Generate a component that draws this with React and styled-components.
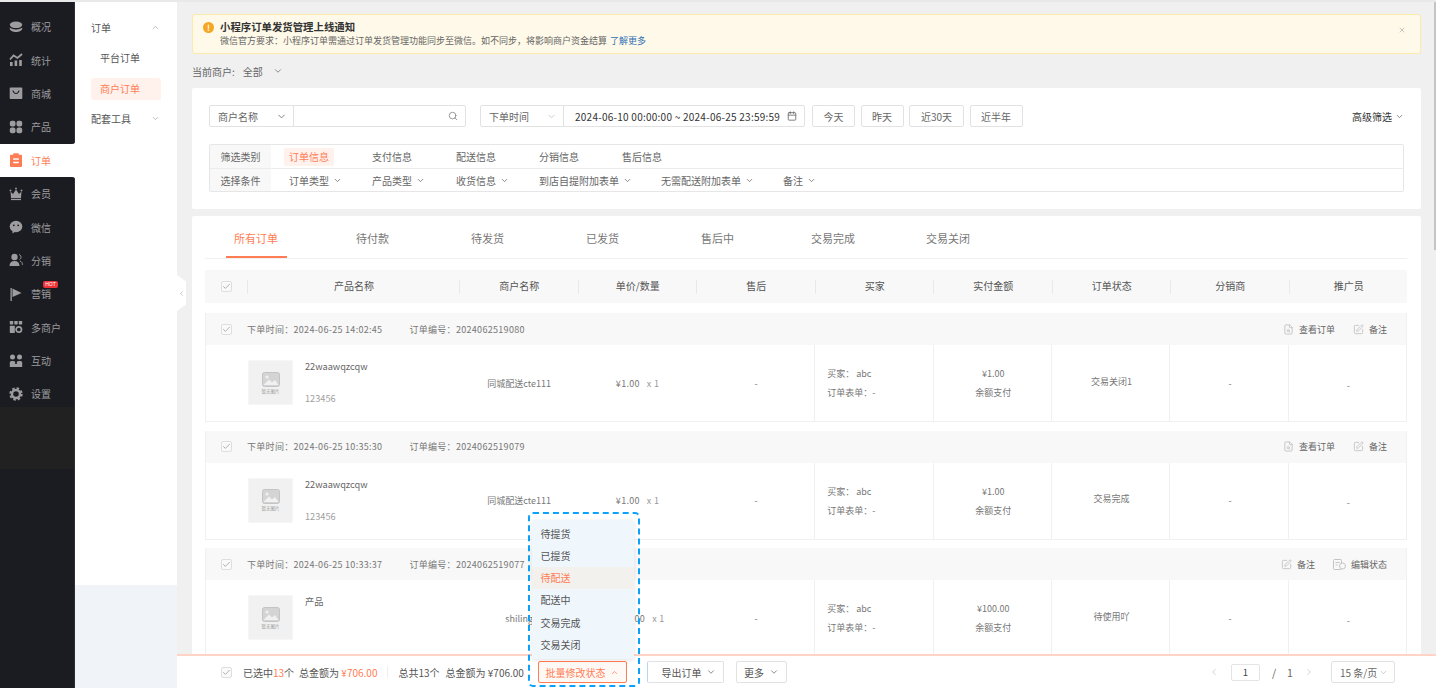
import React from "react";
import styled, { createGlobalStyle } from "styled-components";
import { ChevronDown, ChevronUp, ChevronLeft, ChevronRight, Search, Calendar, X, Check, SquarePen, FileSearch } from "lucide-react";

const Global = createGlobalStyle`
  html, body { margin: 0; padding: 0; width: 1436px; height: 688px; overflow: hidden; background: #f0f0f0; }
  body { font-family: "Noto Sans CJK SC", "Noto Sans", sans-serif; font-size: 10px; color: #555; }
  * { box-sizing: border-box; }
`;

const orange = "#ff7d55";

const Page = styled.div`width: 1436px; height: 688px; display: flex; flex-direction: column; overflow: hidden; position: relative;`;
const TopEdge = styled.div`height: 2px; background: #e9e9e9; flex: none;`;
const Body = styled.div`flex: 1; display: flex; min-height: 0;`;

/* Sidebar */
const Sidebar = styled.nav`width: 75px; flex: none; display: flex; flex-direction: column; background: #fff;`;
const NavGroup = styled.div`
  background: #1b1c22;
  box-shadow: inset -1px 0 0 #2e2f34;
  padding-top: ${p => p.$top || 0}px;
  flex: ${p => (p.$grow ? 1 : "none")};
  border-top-right-radius: ${p => (p.$grow ? 3 : 0)}px;
  border-bottom-right-radius: ${p => (p.$grow ? 0 : 3)}px;
`;
const NavItem = styled.div`
  height: 33.4px;
  display: flex;
  align-items: center;
  padding-left: 9px;
  gap: 8px;
  font-size: 10px;
  color: ${p => (p.$active ? orange : "#9d9d9f")};
  background: ${p => (p.$active ? "#fff" : "transparent")};
  position: relative;
  svg { flex: none; }
`;
const Hot = styled.span`
  position: absolute; left: 43px; top: 4px; width: 15px; height: 7px; border-radius: 2px;
  background: #ee3338; color: #fff; font-size: 5px; line-height: 7px; text-align: center; font-family: "Liberation Sans", sans-serif;
`;
const Band = styled.div`height: 62px; margin-top: -4px; background: #212121; box-shadow: inset -1px 0 0 #2e2f34;`;

/* Sub menu */
const SubMenu = styled.aside`width: 102px; flex: none; background: #f0f3f8; display: flex; flex-direction: column;`;
const SubPanel = styled.div`height: 583px; background: #fff; padding: 9px 16px 0 16px;`;
const SubHead = styled.div`height: 32px; display: flex; align-items: center; justify-content: space-between; font-size: 10px; color: #555; padding-right: 1px; svg { color: #aaa; }`;
const SubLink = styled.div`
  height: 22px; border-radius: 3px; display: flex; align-items: center; padding: 0 0 2px 9px; margin: ${p => p.$mt}px 0 ${p => p.$mb}px; font-size: 10px;
  color: ${p => (p.$active ? orange : "#555")};
  background: ${p => (p.$active ? "#fff1ec" : "transparent")};
`;

/* Main */
const Main = styled.main`flex: 1; min-width: 0; display: flex; flex-direction: column; position: relative;`;
const Scroll = styled.div`flex: 1; min-height: 0; overflow: hidden; padding: 12px 15px 0;`;
const Handle = styled.div`
  position: absolute; left: 0; top: 273px; width: 9px; height: 36px; background: #fff; color: #999;
  clip-path: polygon(0 0, 100% 18%, 100% 82%, 0 100%); display: flex; align-items: center; justify-content: center;
`;
const Thumb = styled.div`position: absolute; right: 0; top: 0; width: 2px; height: 248px; background: #c4c4c4;`;

const Notice = styled.div`
  height: 40px; background: #fef9e8; border: 1px solid #fbeaa9; border-radius: 3px; display: flex; padding: 5px 14px 0 10px; gap: 6px;
`;
const NoticeIcon = styled.span`
  width: 11px; height: 11px; border-radius: 50%; background: #f5a623; color: #fff; font-size: 8px; line-height: 11px; font-weight: 700; text-align: center; flex: none; margin-top: 2px;
`;
const NoticeText = styled.div`flex: 1; line-height: 14px;`;
const NoticeTitle = styled.div`font-size: 10.4px; font-weight: 700; color: #333;`;
const NoticeDesc = styled.div`font-size: 9px; color: #666; a { color: #2f6fb5; margin-left: 3px; }`;
const Close = styled.span`color: #aaa; margin-top: 2px;`;

const Merchant = styled.div`height: 34px; display: flex; align-items: center; font-size: 10px; color: #666; gap: 8px; svg { color: #777; margin-left: 2px; }`;

const Card = styled.section`background: #fff; border-radius: 2px;`;
const FilterCard = styled(Card)`height: 121px; padding: 17px; margin-bottom: 7px;`;
const FilterBar = styled.div`display: flex; align-items: stretch; height: 22px; margin-bottom: 17px;`;
const Joined = styled.div`display: flex; width: ${p => p.$w}px; margin-right: ${p => p.$mr}px; border: 1px solid #e2e2e2; border-radius: 2px; background: #fff;`;
const Pick = styled.div`
  width: ${p => p.$w}px; flex: none; border-right: 1px solid #e2e2e2; display: flex; align-items: center; justify-content: space-between; padding: 0 6px 0 8px; color: #666;
  svg { color: ${p => p.$soft ? "#ccc" : "#777"}; }
`;
const Field = styled.div`flex: 1; display: flex; align-items: center; justify-content: flex-end; padding-right: 7px; svg { color: #888; }`;
const DateField = styled.div`flex: 1; display: flex; align-items: center; justify-content: space-between; padding: 0 7px 0 11px; color: #333; white-space: nowrap; font-size: 10px; letter-spacing: .25px; svg { color: #666; flex: none; }`;
const QuickBtn = styled.button`
  width: ${p => p.$w}px; margin-right: 5.5px; padding: 0; border: 1px solid #e2e2e2; background: #fff; border-radius: 2px; font: inherit; color: #666;
`;
const Advanced = styled.div`margin-left: auto; display: flex; align-items: center; gap: 3px; color: #333; svg { color: #666; }`;

const FilterTable = styled.div`height: 48px; border: 1px solid #e6e6e6; border-radius: 2px;`;
const FilterRow = styled.div`height: ${p => p.$h}px; display: flex; & + & { border-top: 1px solid #ececec; }`;
const FilterLabel = styled.div`width: 61px; flex: none; background: #f8f8f8; display: flex; align-items: center; justify-content: center; color: #666;`;
const FilterItems = styled.div`display: flex; align-items: center; padding-left: 13px;`;
const FilterItem = styled.div`width: ${p => p.$w}px; flex: none; display: flex; align-items: center; gap: 4px; color: #666; svg { color: #666; }`;
const Chip = styled.span`
  padding: 0 5px; height: 18px; line-height: 18px; border-radius: 2px;
  color: ${p => (p.$active ? orange : "#666")};
  background: ${p => (p.$active ? "#fff1ec" : "transparent")};
`;
const Plain = styled.span`padding-left: 5px;`;

const OrdersCard = styled(Card)`padding: 0 14px 20px 13px; height: 600px;`;
const Tabs = styled.div`display: flex; height: 43px; border-bottom: 1px solid #f0f0f0; padding-left: 21px;`;
const Tab = styled.div`width: ${p => p.$w}px; flex: none; font-size: 11px; color: ${p => (p.$active ? orange : "#777")};`;
const TabLabel = styled.div`
  display: inline-block; height: 42px; line-height: 44px; padding: 0 9px 0 8px;
  border-bottom: 2px solid ${p => (p.$active ? orange : "transparent")};
`;

const gridCols = "42px 212px repeat(8, 1fr)";
const HeadRow = styled.div`display: grid; grid-template-columns: ${gridCols}; height: 33px; margin: 11px 0 10px; background: #f8f8f8;`;
const HeadCheck = styled.div`display: flex; align-items: center; padding-left: 16px;`;
const HeadCell = styled.div`
  display: flex; align-items: center; justify-content: center; font-size: 10px; color: #555; padding: 0 0 2px 2px;
  background: linear-gradient(#e9e9e9, #e9e9e9) left center / 1px 14px no-repeat;
`;
const Box = styled.span`
  width: 11px; height: 11px; border: 1px solid #dedede; border-radius: 2px; background: #fafafa; display: inline-flex; align-items: center; justify-content: center; color: #777; flex: none;
`;

const Order = styled.article`border: solid #f0f0f0; border-width: 0 1px 1px; margin-bottom: 8.6px;`;
const OrderHead = styled.div`height: 32px; background: #f8f8f8; display: flex; align-items: center; padding: 0 19px 0 15px; font-size: 9px; color: #777;`;
const OrderMeta = styled.span`margin-left: ${p => p.$ml}px; white-space: nowrap; letter-spacing: .3px;`;
const Actions = styled.div`margin-left: auto; display: flex; gap: 18px;`;
const Action = styled.span`display: flex; align-items: center; gap: 5px; color: #666; svg { color: #c4c4c4; }`;
const OrderBody = styled.div`display: grid; grid-template-columns: 253px repeat(8, 1fr); height: 76px;`;
const Product = styled.div`display: flex; padding: 15px 0 0 42px;`;
const Thumbnail = styled.div`
  width: 45px; height: 45px; flex: none; background: #f1f1f1; border: 1px solid #f6f6f6; border-radius: 1px; margin-right: 12px;
  display: flex; flex-direction: column; align-items: center; justify-content: center; gap: 1px; color: #bbb;
`;
const TinyText = styled.span`font-size: 4.5px; line-height: 6px; color: #999;`;
const ProductText = styled.div`display: flex; flex-direction: column; justify-content: space-between; height: 45px; font-size: 9.2px; color: #666;`;
const ProductName = styled.div`line-height: 13px;`;
const ProductSku = styled.div`color: #a0a0a0; line-height: 13px;`;
const Cell = styled.div`
  display: flex; flex-direction: column; align-items: ${p => (p.$left ? "flex-start" : "center")}; justify-content: center;
  padding-left: ${p => (p.$left ? 12 : 2)}px;
  padding-bottom: ${p => (p.$up ? 4 : 0)}px;
  padding-top: ${p => (p.$down ? 4 : 0)}px;
  border-left: ${p => (p.$line ? "1px solid #f0f0f0" : "0")};
  font-size: 9px; color: #777; line-height: 19px; white-space: nowrap;
`;
const Price = styled.span`display: flex; gap: 7px; letter-spacing: .3px;`;
const Muted = styled.span`color: #999;`;

/* Bottom bar */
const Bar = styled.div`
  height: 34px; flex: none; background: #fff; border-top: 2px solid #ffd3c6; display: flex; align-items: center; padding: 0 41px 0 44px; font-size: 10px; color: #555;
`;
const BarText = styled.span`margin-left: ${p => p.$ml}px; white-space: nowrap; em { font-style: normal; color: ${orange}; }`;
const BarRule = styled.span`width: 1px; height: 12px; background: #eee; margin-left: 10px;`;
const BatchWrap = styled.div`position: relative; margin-left: 14px; width: 89px; height: 22px;`;
const BatchBtn = styled.button`
  width: 100%; height: 100%; padding: 0; border: 1px solid ${orange}; border-radius: 2px; background: #fff9f6; color: ${orange}; font: inherit;
  display: flex; align-items: center; justify-content: center; gap: 5px;
`;
const Marked = styled.div`
  position: absolute; left: -10px; top: -149px; width: 112px; height: 175px; border: 2.5px dashed #0ca2fb; border-radius: 5px; padding: 5.5px 3.5px 0 2.5px;
`;
const Menu = styled.ul`
  list-style: none; margin: 0; padding: 3px 0; height: 139px; background: #eff7fd; border-radius: 3px; box-shadow: 0 1px 4px rgba(0,0,0,.12);
`;
const MenuItem = styled.li`
  height: 22.3px; line-height: 22px; padding-left: 8px; font-size: 10px;
  color: ${p => (p.$active ? orange : "#555")};
  background: ${p => (p.$active ? "#f2f1ee" : "transparent")};
`;
const GhostBtn = styled.button`
  width: ${p => p.$w}px; height: 22px; margin-left: ${p => p.$ml}px; padding: 0 0 0 ${p => p.$focus ? 7 : 0}px; background: #fff; border: 1px solid #e2e2e2; border-radius: 2px; font: inherit; color: #555;
  border-left-color: ${p => p.$focus ? "#b7d8f2" : "#e2e2e2"};
  display: flex; align-items: center; justify-content: center; gap: 5px; svg { color: #777; }
`;
const Pager = styled.div`margin-left: auto; display: flex; align-items: center; color: #666;`;
const PagerArrow = styled.span`color: #c8c8c8; display: flex; width: ${p => p.$w}px;`;
const PageBox = styled.div`width: 29px; height: 17px; border: 1px solid #e4e4e4; border-radius: 2px; text-align: center; line-height: 15px; color: #444; margin-right: 12px; font-size: 9.5px;`;
const PageOf = styled.span`width: ${p => p.$w}px; font-size: 10.5px;`;
const SizeSel = styled.div`width: 64px; height: 22px; margin-left: 6px; border: 1px solid #e2e2e2; border-radius: 2px; display: flex; align-items: center; justify-content: space-between; padding: 0 6px 0 8px; white-space: nowrap; svg { color: #bbb; flex: none; }`;

/* Icons */
const Ico = ({ children, color = "currentColor" }) => (
  <svg width="14" height="14" viewBox="0 0 14 14" fill={color}>{children}</svg>
);
const dark = "#1b1c22";
const navIcons = {
  layers: <Ico><ellipse cx="7" cy="4.8" rx="6.2" ry="3.3" /><path d="M.8 7.6c1 .8 3 2 6.2 2s5.2-1.2 6.2-2v1.5c0 1.5-3 3-6.2 3s-6.2-1.500-6.200-3z" /></Ico>,
  chart: <Ico><rect x="1" y="9" width="2.6" height="4" /><rect x="5.6" y="7.500" width="2.600" height="5.500" /><rect x="10.200" y="7" width="2.600" height="6" /><path d="M1 6.500 4.500 2.500 8.500 5 13 1" fill="none" stroke="currentColor" strokeWidth="1.800" /></Ico>,
  shop: <Ico><path d="M1.500 1.500h11a.8.8 0 0 1 .8.8v10a.8.8 0 0 1-.8.8h-11a.8.8 0 0 1-.8-.8v-10a.8.8 0 0 1 .8-.8z" /><path d="M4 4.500c.4 2 1.500 3 3 3s2.600-1 3-3" fill="none" stroke={dark} strokeWidth="1.100" /></Ico>,
  grid: <Ico><rect x=".8" y=".8" width="5.700" height="5.700" rx="2" /><rect x="7.500" y=".8" width="5.700" height="5.700" rx="2" /><rect x=".8" y="7.500" width="5.700" height="5.700" rx="2" /><rect x="7.500" y="7.500" width="5.700" height="5.700" rx="2" /></Ico>,
  order: <Ico color={orange}><path d="M4.200 1.800V1a.8.8 0 0 1 .8-.8h4a.8.8 0 0 1 .8.8v.8h2.200a1 1 0 0 1 1 1V13a1 1 0 0 1-1 1H2a1 1 0 0 1-1-1V2.800a1 1 0 0 1 1-1z" /><path d="M4.200 6h5.600M4.200 9.500h5.600" stroke="#fff" strokeWidth="1.500" /></Ico>,
  crown: <Ico><path d="M1.500 4.500 4 7 7 2.500 10 7l2.500-2.500L12 11H2z" /><circle cx="1.500" cy="3.500" r=".9" /><circle cx="7" cy="1.500" r=".9" /><circle cx="12.500" cy="3.500" r=".9" /><rect x="2" y="11.800" width="10" height="1.300" /></Ico>,
  chat: <Ico><ellipse cx="7" cy="6.500" rx="6.300" ry="5.700" /><path d="M3.500 10.500v3l3-2z" /><circle cx="4.800" cy="5.300" r=".9" fill={dark} /><circle cx="9.200" cy="5.300" r=".9" fill={dark} /></Ico>,
  person: <Ico><circle cx="5.500" cy="4" r="3.200" /><path d="M.5 13c0-3.300 2-5 5-5s5 1.700 5 5z" /><path d="M10 1.500c1.500.6 2 1.600 2 2.600s-.6 2-1.500 2.500M11 8c1.500.6 2.500 2 2.500 3.800" fill="none" stroke="currentColor" strokeWidth="1" /></Ico>,
  flag: <Ico><rect x="1.500" y="1" width="1.300" height="13" /><path d="M3.500 1.500 12.500 6 3.500 10z" /></Ico>,
  merchant: <Ico><rect x=".8" y="1" width="3.400" height="3.400" rx=".6" /><rect x="5.300" y="1" width="3.400" height="3.400" rx=".6" /><rect x="9.800" y="1" width="3.400" height="3.400" rx=".6" /><rect x=".8" y="5.800" width="5" height="7.200" rx=".6" /><circle cx="9.800" cy="9.500" r="2.700" fill="none" stroke="currentColor" strokeWidth="1.700" /></Ico>,
  team: <Ico><circle cx="3.500" cy="3" r="2.500" /><circle cx="10.500" cy="3" r="2.500" /><path d="M.8 13V8.800c0-1 .7-1.800 1.700-1.800h2c1 0 1.700.8 1.700 1.800V10h1.600V8.800c0-1 .7-1.800 1.700-1.800h2c1 0 1.700.8 1.700 1.800V13z" /></Ico>,
  gear: <Ico><circle cx="7" cy="7" r="4" fill="none" stroke="currentColor" strokeWidth="2.400" /><circle cx="7" cy="7" r="5.800" fill="none" stroke="currentColor" strokeWidth="1.800" strokeDasharray="2.500 2.050" /></Ico>,
};

const ImgPlaceholder = () => (
  <Thumbnail>
    <svg width="18" height="15" viewBox="0 0 18 15">
      <rect x=".5" y=".5" width="17" height="14" rx="2" fill="#d4d4d4" stroke="#c4c4c4" />
      <circle cx="5" cy="5" r="1.600" fill="#f1f1f1" />
      <path d="M1.500 13 7 7.500l3 3 3-2.500 3.500 5z" fill="#f1f1f1" />
    </svg>
    <TinyText>暂无图片</TinyText>
  </Thumbnail>
);

const CheckBox = () => <Box><Check size={9} strokeWidth={1.500} /></Box>;

const EditStatusIcon = () => (
  <svg width="13" height="11" viewBox="0 0 13 11" fill="none" stroke="currentColor">
    <rect x=".5" y=".5" width="8" height="10" rx="1" />
    <path d="M2.500 3.500h4M2.500 6h2" />
    <circle cx="9.500" cy="7" r="3" fill="#f8f8f8" />
  </svg>
);

const nav1 = [["layers", "概况"], ["chart", "统计"], ["shop", "商城"], ["grid", "产品"]];
const nav2 = [["crown", "会员"], ["chat", "微信"], ["person", "分销"], ["flag", "营销", true], ["merchant", "多商户"], ["team", "互动"], ["gear", "设置"]];
const tabs = [["所有订单", 122, true], ["待付款", 115], ["待发货", 115], ["已发货", 115], ["售后中", 110], ["交易完成", 115], ["交易关闭", 100]];
const heads = ["产品名称", "商户名称", "单价/数量", "售后", "买家", "实付金额", "订单状态", "分销商", "推广员"];
const orders = [
  { time: "2024-06-25 14:02:45", no: "2024062519080", name: "22waawqzcqw", sku: "123456", shop: "同城配送cte111", price: "¥1.00", status: "交易关闭1", up: true, view: true },
  { time: "2024-06-25 10:35:30", no: "2024062519079", name: "22waawqzcqw", sku: "123456", shop: "同城配送cte111", price: "¥1.00", status: "交易完成", up: true, view: true },
  { time: "2024-06-25 10:33:37", no: "2024062519077", name: "产品", sku: "", shop: "shiling", price: "¥100.00", status: "待使用吖", up: true, view: false },
];

export default function App() {
  return (
    <Page>
      <Global />
      <TopEdge />
      <Body>
        <Sidebar>
          <NavGroup $top={8}>
            {nav1.map(([i, t]) => <NavItem key={t}>{navIcons[i]}{t}</NavItem>)}
          </NavGroup>
          <NavItem $active>{navIcons.order}订单</NavItem>
          <NavGroup $grow>
            {nav2.map(([i, t, hot]) => (
              <NavItem key={t}>{navIcons[i]}{t}{hot && <Hot>HOT</Hot>}</NavItem>
            ))}
            <Band />
          </NavGroup>
        </Sidebar>

        <SubMenu>
          <SubPanel>
            <SubHead>订单<ChevronUp size={9} /></SubHead>
            <SubLink $mt={4} $mb={9}>平台订单</SubLink>
            <SubLink $active $mt={0} $mb={2}>商户订单</SubLink>
            <SubHead>配套工具<ChevronDown size={9} /></SubHead>
          </SubPanel>
        </SubMenu>

        <Main>
          <Handle><ChevronLeft size={7} /></Handle>
          <Thumb />
          <Scroll>
            <Notice>
              <NoticeIcon>!</NoticeIcon>
              <NoticeText>
                <NoticeTitle>小程序订单发货管理上线通知</NoticeTitle>
                <NoticeDesc>微信官方要求：小程序订单需通过订单发货管理功能同步至微信。如不同步，将影响商户资金结算<a>了解更多</a></NoticeDesc>
              </NoticeText>
              <Close><X size={8} /></Close>
            </Notice>
            <Merchant>当前商户:<span>全部</span><ChevronDown size={10} /></Merchant>

            <FilterCard>
              <FilterBar>
                <Joined $w={257} $mr={14}>
                  <Pick $w={84}>商户名称<ChevronDown size={11} /></Pick>
                  <Field><Search size={10} /></Field>
                </Joined>
                <Joined $w={325} $mr={7}>
                  <Pick $w={83} $soft>下单时间<ChevronDown size={11} /></Pick>
                  <DateField>2024-06-10 00:00:00 ~ 2024-06-25 23:59:59<Calendar size={10} /></DateField>
                </Joined>
                <QuickBtn $w={43}>今天</QuickBtn>
                <QuickBtn $w={43}>昨天</QuickBtn>
                <QuickBtn $w={55}>近30天</QuickBtn>
                <QuickBtn $w={53}>近半年</QuickBtn>
                <Advanced>高级筛选<ChevronDown size={9} /></Advanced>
              </FilterBar>
              <FilterTable>
                <FilterRow $h={23}>
                  <FilterLabel>筛选类别</FilterLabel>
                  <FilterItems>
                    <FilterItem $w={83}><Chip $active>订单信息</Chip></FilterItem>
                    <FilterItem $w={84}><Chip>支付信息</Chip></FilterItem>
                    <FilterItem $w={83}><Chip>配送信息</Chip></FilterItem>
                    <FilterItem $w={83}><Chip>分销信息</Chip></FilterItem>
                    <FilterItem $w={83}><Chip>售后信息</Chip></FilterItem>
                  </FilterItems>
                </FilterRow>
                <FilterRow $h={23}>
                  <FilterLabel>选择条件</FilterLabel>
                  <FilterItems>
                    {[["订单类型", 83], ["产品类型", 84], ["收货信息", 83], ["到店自提附加表单", 122], ["无需配送附加表单", 122], ["备注", 60]].map(([t, w]) => (
                      <FilterItem key={t} $w={w}><Plain>{t}</Plain><ChevronDown size={9} /></FilterItem>
                    ))}
                  </FilterItems>
                </FilterRow>
              </FilterTable>
            </FilterCard>

            <OrdersCard>
              <Tabs>
                {tabs.map(([t, w, a]) => <Tab key={t} $w={w} $active={a}><TabLabel $active={a}>{t}</TabLabel></Tab>)}
              </Tabs>
              <HeadRow>
                <HeadCheck><CheckBox /></HeadCheck>
                {heads.map(h => <HeadCell key={h}>{h}</HeadCell>)}
              </HeadRow>
              {orders.map(o => (
                <Order key={o.no}>
                  <OrderHead>
                    <CheckBox />
                    <OrderMeta $ml={15}>下单时间：{o.time}</OrderMeta>
                    <OrderMeta $ml={27}>订单编号：{o.no}</OrderMeta>
                    <Actions>
                      {o.view && <Action><FileSearch size={11} />查看订单</Action>}
                      <Action><SquarePen size={11} />备注</Action>
                      {!o.view && <Action><EditStatusIcon />编辑状态</Action>}
                    </Actions>
                  </OrderHead>
                  <OrderBody>
                    <Product>
                      <ImgPlaceholder />
                      <ProductText>
                        <ProductName>{o.name}</ProductName>
                        <ProductSku>{o.sku}</ProductSku>
                      </ProductText>
                    </Product>
                    <Cell>{o.shop}</Cell>
                    <Cell><Price>{o.price}<Muted>x 1</Muted></Price></Cell>
                    <Cell>-</Cell>
                    <Cell $line $left><span>买家： abc</span><span>订单表单：-</span></Cell>
                    <Cell $line><span>{o.price}</span><span>余额支付</span></Cell>
                    <Cell $line $up={o.up}>{o.status}</Cell>
                    <Cell $line>-</Cell>
                    <Cell $line $down>-</Cell>
                  </OrderBody>
                </Order>
              ))}
            </OrdersCard>
          </Scroll>

          <Bar>
            <CheckBox />
            <BarText $ml={11}>已选中<em>13</em>个</BarText>
            <BarText $ml={5}>总金额为 <em>¥706.00</em></BarText>
            <BarRule />
            <BarText $ml={10}>总共13个</BarText>
            <BarText $ml={6}>总金额为 ¥706.00</BarText>
            <BatchWrap>
              <BatchBtn>批量修改状态<ChevronUp size={9} /></BatchBtn>
              <Marked>
                <Menu>
                  <MenuItem>待提货</MenuItem>
                  <MenuItem>已提货</MenuItem>
                  <MenuItem $active>待配送</MenuItem>
                  <MenuItem>配送中</MenuItem>
                  <MenuItem>交易完成</MenuItem>
                  <MenuItem>交易关闭</MenuItem>
                </Menu>
              </Marked>
            </BatchWrap>
            <GhostBtn $w={77} $ml={20} $focus>导出订单<ChevronDown size={10} /></GhostBtn>
            <GhostBtn $w={51} $ml={12}>更多<ChevronDown size={10} /></GhostBtn>
            <Pager>
              <PagerArrow $w={22}><ChevronLeft size={10} /></PagerArrow>
              <PageBox>1</PageBox>
              <PageOf $w={15}>/</PageOf>
              <PageOf $w={17}>1</PageOf>
              <PagerArrow $w={21}><ChevronRight size={10} /></PagerArrow>
              <SizeSel>15 条/页<ChevronDown size={9} /></SizeSel>
            </Pager>
          </Bar>
        </Main>
      </Body>
    </Page>
  );
}
